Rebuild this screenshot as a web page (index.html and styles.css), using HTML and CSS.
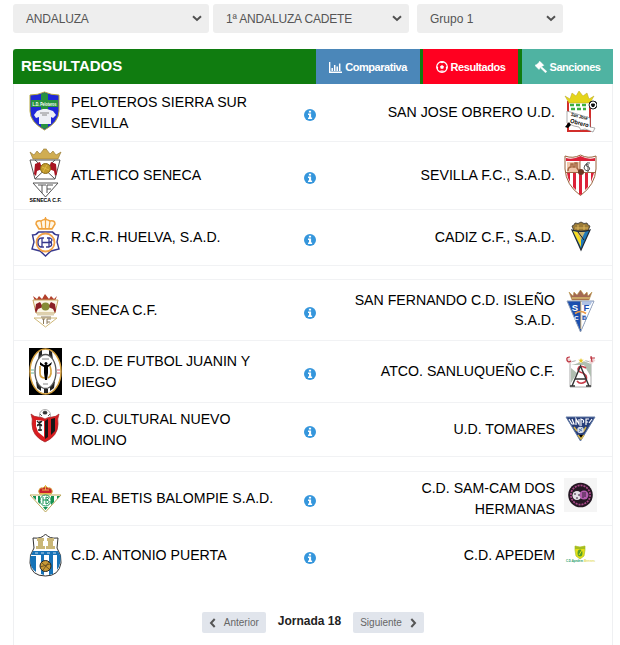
FILE: index.html
```
<!DOCTYPE html>
<html lang="es">
<head>
<meta charset="utf-8">
<title>Resultados</title>
<link rel="stylesheet" href="styles.css">
</head>
<body>
<svg class="defs" width="0" height="0">
  <symbol id="info" viewBox="0 0 12 12"><circle cx="6" cy="6" r="6" fill="#3596dc"/><path d="M4.900 1.700h2.200v1.700H4.900zM4 4.500h3.100v4h1v1.400H4V8.500h1V5.900H4z" fill="#fff"/></symbol>
  <symbol id="chev" viewBox="0 0 10 7"><path d="M1 1.300l4 3.700 4-3.700" fill="none" stroke="#505050" stroke-width="2"/></symbol>
</svg>

<div class="filters">
  <div class="select caps">ANDALUZA<svg><use href="#chev"/></svg></div>
  <div class="select caps">1ª ANDALUZA CADETE<svg><use href="#chev"/></svg></div>
  <div class="select group">Grupo 1<svg><use href="#chev"/></svg></div>
</div>

<section class="panel">
  <header class="bar">
    <h1>RESULTADOS</h1>
    <a class="tab compare"><svg viewBox="0 0 13 11"><path d="M.6 0v10.300H13M3.200 9V6M5.700 9V3M8.200 9V4.500M10.700 9V1.500" fill="none" stroke="#fff" stroke-width="1.500"/></svg>Comparativa</a>
    <a class="tab results"><svg viewBox="0 0 12 12"><circle cx="6" cy="6" r="5.300" fill="none" stroke="#fff" stroke-width="1.200"/><path d="M6 3.900l2 1.500-.8 2.300H4.800L4 5.400z M3.500 1.200L6 2.300l2.500-1.100L8 .5H4zM.8 5l1.400 1.200-.4 2.600L.7 7zM11.200 5L9.800 6.200l.4 2.600L11.300 7zM4 10.800l.5-1.400h3l.5 1.400z" fill="#fff"/></svg>Resultados</a>
    <a class="tab sanctions"><svg viewBox="0 0 12 12"><path d="M4.800.3l4 4-1 .8-.4-.2-1.200 1.200 1 .2 4.600 4.100-1.300 1.400-4.600-4.500-.4-1-.8.800.2.500-.9.900-4-4 .9-.9.600.2L4.200 1.300 4 .9z" fill="#fff" stroke="#fff" stroke-width=".5"/></svg>Sanciones</a>
  </header>

  <div class="row r1">
    <svg class="crest" viewBox="0 0 33 57">
      <path d="M1 11Q9 11 15.500 8 22 11 30 11V27Q30 38 15.500 46 1 38 1 27z" fill="#2028d8" stroke="#b5a83c"/>
      <path d="M12 10l3.500-1.500L19 10v33l-3.500 2-3.500-2zM2 16h27v7H2z" fill="#28923e"/>
      <text x="15.500" y="21.500" class="tiny" font-size="5" textLength="24" lengthAdjust="spacingAndGlyphs" fill="#fff">L.D. Peloteros</text>
      <path d="M8 27l6-2h4l6 2 3 4-3 3-2-1v7H10v-7l-3 1-2-3z" fill="#eef0f5"/><path d="M11 29h9M13 31h5" stroke="#888"/>
    </svg>
    <div class="name">PELOTEROS SIERRA SUR SEVILLA</div>
    <svg class="info"><use href="#info"/></svg>
    <div class="name away">SAN JOSE OBRERO U.D.</div>
    <svg class="crest" viewBox="0 0 33 57">
      <path d="M4 18h22v29H4z" fill="#fff" stroke="#d22e2b" stroke-width="2"/>
      <path d="M1 12l5 3 2-6 4 3 3-5 4 5 4-3 2 6 5-3-4 7H5z" fill="#e5d51a" stroke="#b7a720" stroke-width=".5"/>
      <path d="M6 21h17M7 25h15" stroke="#3cae3e" stroke-width="2.500" stroke-dasharray="4 2"/>
      <path d="M3 27l23 7v9l5 1-2 4-8-3-4 1-2-3-5-1-7-3z" fill="#fff" stroke="#777" stroke-width=".6"/>
      <text x="15" y="34" class="tiny" font-size="5" textLength="17" lengthAdjust="spacingAndGlyphs" transform="rotate(15 15 34)">San José</text><text x="15" y="41" class="tiny" font-size="6" textLength="19" lengthAdjust="spacingAndGlyphs" transform="rotate(15 15 41)">Obrero</text>
      <circle cx="29" cy="21" r="4" fill="#fff" stroke="#222"/><path d="M27.500 20h3l-.5 2.500h-2zM25.500 19l2-1.500M31 17.500l1.500 2M26 23.500l1 1M32 23l-1.500 1.500" fill="#111" stroke="#111"/><path d="M1 43l4-5 2 3-3 3z"/>
    </svg>
  </div>

  <div class="row r2">
    <svg class="crest" viewBox="0 0 33 67">
      <path d="M1 10l4 3 3-4 3 3 3.500-4.500V7h3v.5L21 12l3-3 3 4 5-3-3 7H4z" fill="#d0ad52" stroke="#91742e" stroke-width=".6"/>
      <path d="M1 18h30l-5 19H6zM6 37L26 18M26 37L6 18M4 41h25L16.500 55z" fill="none" stroke="#555"/>
      <path d="M6 22l5-2 2 7-5 2-1 5-2-2zM27 22l-5-2-2 7 5 2 1 5 2-2z" fill="#a81422"/>
      <circle cx="16.500" cy="26.500" r="5" fill="#c19a2d" stroke="#896917"/><path d="M13 25l7 3M18 23l-4 7" stroke="#edc64b" stroke-width=".7"/>
      <path d="M9 43h8M13 43v8M18 51v-8h6M18 47h4" fill="none" stroke="#555"/>
      <text x="16.500" y="60" class="tiny" font-size="5" textLength="32" lengthAdjust="spacingAndGlyphs">SENECA C.F.</text>
    </svg>
    <div class="name">ATLETICO SENECA</div>
    <svg class="info"><use href="#info"/></svg>
    <div class="name away">SEVILLA F.C., S.A.D.</div>
    <svg class="crest" viewBox="0 0 33 67">
      <path d="M1 14Q9 17 16.500 13 24 17 32 14V27Q31 43 16.500 53.500 2 43 1 27z" fill="#fff" stroke="#99613b"/>
      <path d="M2 16Q9 18 16.500 14 24 18 31 16v3H2zM3 31h3v9l-2-4zM9 31h3v17l-3-3zM15 31h3v21l-1.500 1-1.500-1zM21 31h3v14l-3 3zM27 31h3l-3 9z" fill="#dc2138"/>
      <path d="M3 20h13v10H3z" fill="#efc6aa"/><path d="M4 29q0-4 3-4v-3h2v3h2v-4h2v5l2 3" fill="none" stroke="#a46742" stroke-width="1.500"/><path d="M16 19v12M2 30.500h29" stroke="#9c6847"/><path d="M26 21q-4-1-4 1.500t3 2.500q2 2-1 4-3 0-4-3 0-4 4-4v8" fill="none" stroke="#555"/><circle cx="17" cy="30" r="3" fill="#6e3522"/>
    </svg>
  </div>

  <div class="row r3">
    <svg class="crest" viewBox="0 0 33 55">
      <path d="M10 19l-3-5q0-4 5-3 4-3 9 0 5-1 5 3l-3 5z" fill="#fff7e6" stroke="#f0a23d" stroke-width="1.500"/><path d="M16.500 7v12M15 9h3M12 11l1 7M21 11l-1 7M9 18.500h15" stroke="#f0a23d" stroke-width="1.200"/>
      <path d="M3.500 25q4 0 6-3h14q2 3 6 3l-1.500 7 2 7-8 2-5.500 5-5.500-5-8-2 2-7z" fill="#fff" stroke="#37388d" stroke-width="1.400"/>
      <circle cx="16.500" cy="32.500" r="9" fill="#fff" stroke="#f2a248" stroke-width="1.800"/><path d="M15 28q-6-1-6 4.500t6 4.500M13 28v9M20 28v9M13 32.500h10M18 28h3q4 2 0 4 4 3-1 5h-3" fill="none" stroke="#37388d" stroke-width="1.300"/>
    </svg>
    <div class="name">R.C.R. HUELVA, S.A.D.</div>
    <svg class="info"><use href="#info"/></svg>
    <div class="name away">CADIZ C.F., S.A.D.</div>
    <svg class="crest" viewBox="0 0 33 55">
      <path d="M8 16l2-1 1-2 3 .5L17 12l3 1.500 3-.5 1 2 2 1-2 5H10z" fill="#9b7b38" stroke="#333" stroke-width=".8"/><path d="M11 18h13M14 15v5M20 15v5" stroke="#ddb75c"/>
      <path d="M8 20q9 3 18 0L17 40z" fill="#2079b9" stroke="#222a35" stroke-width="1.200"/><path d="M9 21l8 2v14z" fill="#f8dc20"/><path d="M13 22h8l-4 8z" fill="#ccb671"/><path d="M14 22l6 8" stroke="#222"/>
    </svg>
  </div>
  <div class="spacer"></div>

  <div class="row r4">
    <svg class="crest" viewBox="0 0 33 60">
      <path d="M4 16l4 3 2-3 3 3 3-5 4 5 2-3 3 3 3-3-2 5H6z" fill="#b3412c"/><path d="M4 20h25l-3 13H7z" fill="#fbf6e6" stroke="#c7a660"/>
      <path d="M7 24l4-2 3 5-5 2-2 4-1-3zM26 24l-4-2-3 5 5 2 2 4 1-3z" fill="#8c2026"/><circle cx="16.500" cy="26.500" r="4" fill="#858b35"/>
      <path d="M8 34h17" stroke="#ddd0ae" stroke-width="3"/><path d="M5 38h23L16.500 47z" fill="#fff" stroke="#cfb878"/><path d="M12 37h10M13 39h3M14.500 39v5M18 44v-5h4M18 42h3" stroke="#8b795a" fill="none"/>
    </svg>
    <div class="name">SENECA C.F.</div>
    <svg class="info"><use href="#info"/></svg>
    <div class="name away">SAN FERNANDO C.D. ISLEÑO S.A.D.</div>
    <svg class="crest" viewBox="0 0 33 60">
      <path d="M5 12l4 4 1-4 3 3 3.500-5 3.500 5 3-3 1 4 4-4-3 8H8z" fill="#a36852" stroke="#b9974a" stroke-width=".6"/><path d="M8 18h18" stroke="#caa665" stroke-width="2"/>
      <path d="M3 21h27L16.500 52z" fill="#1b4fae" stroke="#8d9cb5"/><path d="M17 21.500h12.500L17 50z" fill="#fff"/><path d="M18 22h10l-1.500 3H18zM18 35h4l-1.500 5H18z" fill="#1b4fae" opacity=".35"/>
      <text x="11" y="30.500" class="tiny" font-size="9.500" fill="#fff">S</text><text x="22.500" y="30.500" class="tiny" font-size="9.500" fill="#1b4fae">F</text><path d="M11 33.500q5.500-4 11 0" fill="none" stroke="#ed9944" stroke-width="1.600"/><text x="12.500" y="40" class="tiny" font-size="6" fill="#fff">C</text><text x="20.500" y="40" class="tiny" font-size="6" fill="#1b4fae">D</text><path d="M16.800 21v28" stroke="#c1a570"/>
    </svg>
  </div>

  <div class="row r5">
    <svg class="crest" viewBox="0 0 33 61">
      <path d="M0 7h33v47H0z"/><ellipse cx="16.500" cy="30.500" rx="15.500" ry="22.500" fill="#fff" stroke="#d5a03e" stroke-width="1.500"/>
      <path d="M10 11l3-2v7l-4 3zM23 11l-3-2v7l4 3zM7 40l5 5v5l-4-3zM26 40l-5 5v5l4-3zM15 48h4v4h-4z" fill="#222"/>
      <ellipse cx="16.500" cy="30.500" rx="10.500" ry="17" fill="#fff" stroke="#555" stroke-width="1.300"/>
      <path d="M11 25v7q0 5 5 5M21 25q3 9-2 12" fill="none" stroke="#d5a03e" stroke-width="1.700"/><path d="M11 21l4 3h4l4-3-1 3-3 2v6l-1 7h-2l-1-7v-6l-4-2z"/><circle cx="17" cy="22.500" r="1.500"/><path d="M13 18h7M14 43h5" stroke="#888"/><path d="M2 29h3M2 32h3" stroke="#68b898"/><path d="M28 29h3M28 32h3" stroke="#db6471"/>
    </svg>
    <div class="name">C.D. DE FUTBOL JUANIN Y DIEGO</div>
    <svg class="info"><use href="#info"/></svg>
    <div class="name away">ATCO. SANLUQUEÑO C.F.</div>
    <svg class="crest" viewBox="0 0 33 61">
      <path d="M6 21q5 0 10.500-4.500Q22 21 27 21v25H6z" fill="#fff" stroke="#aaa"/><path d="M7 24q8-1 10-5l10 4v13l-7-12zM7 27l6 5-6 10z" fill="#b1bfb1"/>
      <path d="M7 22l-4-4M26 22l4-4" stroke="#eed5d5" stroke-width="4"/><path d="M6 16q-4 0-3 3t4 1M26 17h5M27 15l1 6" fill="none" stroke="#bd3440" stroke-width="1.200"/><path d="M7 17l9.500-2 9.500 2-9.500 5z" fill="#fff"/>
      <path d="M17 17l.7 1.800h2l-1.600 1.300.6 2-1.700-1.200-1.700 1.200.6-2-1.600-1.300h2z" fill="#e7c521"/>
      <path d="M22 27q-7-4-8 1 0 3 5 4 6 4 2 9-5 3-8-1" fill="none" stroke="#c83b48" stroke-width="1.600"/><path d="M8 45l8.500-20L25 45M11 38h11M6 45h5M22 45h5" fill="none" stroke="#333" stroke-width="1.400"/>
    </svg>
  </div>

  <div class="row r6">
    <svg class="crest" viewBox="0 0 33 53">
      <circle cx="16" cy="12" r="5.500" fill="#fff" stroke="#999" stroke-width=".8"/><path d="M14 9l2-1 2 1-.5 2h-3zM11 11l2 2M21 11l-2 2" fill="#333" stroke="#333" stroke-width=".8"/>
      <path d="M2 11q3 3 7 3 4 0 7 2 3-2 7-2 4 0 7-3-2 5-1 10 0 12-13 18Q3 33 3 21q1-5-1-10z" fill="#d91c20" stroke="#a22a2b" stroke-width=".7"/>
      <path d="M7 17l8 1v16l-6-5-2-6z" fill="#fff"/><path d="M8 18l5 5M13 18l-5 5M8 22h5M11 18v10M9 27h4" stroke="#222" stroke-width="1.300"/><path d="M16 18l3-2v18l-3 2zM22 16l4-1v13l-4 4z" fill="#171717"/>
    </svg>
    <div class="name">C.D. CULTURAL NUEVO MOLINO</div>
    <svg class="info"><use href="#info"/></svg>
    <div class="name away">U.D. TOMARES</div>
    <svg class="crest" viewBox="0 0 33 53">
      <path d="M2 14h29L16.500 38z" fill="#263d79" stroke="#647da8"/><path d="M5 16l3 5h2l-2-5M12 22v-6l3 5v-5M17 23v-7q4 1 2 4M22 22v-6h3M22 19h2M28 16l-3 4" stroke="#fff" stroke-width="1.200" fill="none"/><path d="M10 24l3 4M22 24l-3 5M14 32l3 4 3-4" stroke="#d5b54d" stroke-width="1.500"/><circle cx="16.500" cy="27" r="3.300" fill="#d5dce8"/><path d="M15 26l3 2M18 25l-3 4" stroke="#5879ad"/>
    </svg>
  </div>
  <div class="spacer tall"></div>

  <div class="row r7">
    <svg class="crest" viewBox="0 0 33 53">
      <path d="M11 22q-2-2-1-4 1-3 4-2l2.500-2 2.500 2q3-1 4 2 1 2-1 4z" fill="#c9222e" stroke="#d5a538"/><path d="M11 21.500h11M16.500 13v5M13 18h7" stroke="#e8bb48"/>
      <path d="M1 23h31L16.500 40z" fill="#fff" stroke="#bca95b"/><path d="M4 24h3v4l-3-3zM9 24h2v8l-2-2zM22 24h3v6l-3 3zM28 24h3l-3 3zM14 35h5l-2.500 3z" fill="#159151"/>
      <circle cx="16.500" cy="28.500" r="5.500" fill="#fff" stroke="#159151"/><path d="M14 25v7M14 28h5M17 25v7M17 25q5 1 1 3 5 2-1 4" fill="none" stroke="#159151"/>
    </svg>
    <div class="name">REAL BETIS BALOMPIE S.A.D.</div>
    <svg class="info"><use href="#info"/></svg>
    <div class="name away">C.D. SAM-CAM DOS HERMANAS</div>
    <svg class="crest" viewBox="0 0 33 53">
      <path d="M0 6h33v34H0z" fill="#f5f5f5"/><circle cx="16.500" cy="23" r="12.300" fill="#251723"/><circle cx="16.500" cy="23" r="9.600" fill="none" stroke="#a84788" stroke-width="1.700" stroke-dasharray="2 1"/><circle cx="13" cy="23.500" r="4.500" fill="#e4dfe6"/><circle cx="20" cy="23" r="4.500" fill="#b45bae"/><path d="M10 22h2M14 23h2M12 26h2M19 20v6M21 20v5" stroke="#352238"/>
    </svg>
  </div>

  <div class="row r8">
    <svg class="crest" viewBox="0 0 33 58">
      <path d="M4 12q9 1 12.500-4Q20 13 29 12l-1 10q5 7 4 15-2 13-15.500 13Q2 50 1 37q-1-8 4-15z" fill="#fff" stroke="#333"/>
      <path d="M4 25h25l2 4H2z" fill="#1773b7"/><path d="M1.500 30H7v16q-6-4-6-12zM12 29h3v20l-3-1zM20 29h4v19l-4 1zM28 29h3.500q1 9-3.500 15z" fill="#1773b7"/>
      <path d="M8 12h7v3h-1v5h2v3H7v-3h2v-5H8zM18 12h7v3h-1v5h2v3h-9v-3h2v-5h-1z" fill="#cab778"/><path d="M6 27h21" stroke="#c8dceb" stroke-dasharray="3 3"/>
      <circle cx="16.500" cy="40" r="5.500" fill="#c99a35" stroke="#222"/><path d="M13 37l7 6M20 36l-6 8M11 41l10-3" stroke="#5f4820" stroke-width=".8"/>
    </svg>
    <div class="name">C.D. ANTONIO PUERTA</div>
    <svg class="info"><use href="#info"/></svg>
    <div class="name away">C.D. APEDEM</div>
    <svg class="crest" viewBox="0 0 33 58">
      <path d="M11 20q5 2 10 0v4l-1 6-4 3-4-3-1-6z" fill="#e4df15" stroke="#a9c22c" stroke-width=".7"/><path d="M11 20q5 2 10 0v3H11z" fill="#a5bd20"/><ellipse cx="16" cy="27" rx="2.500" ry="3.500" fill="#559f2c"/><path d="M15 29l3-5" stroke="#e4df15"/>
      <text x="2" y="36" class="tiny start" font-size="3.500" textLength="17" lengthAdjust="spacingAndGlyphs" fill="#269b67">C.D.Apedem</text><text x="20" y="36" class="tiny start" font-size="3.500" textLength="11" lengthAdjust="spacingAndGlyphs" fill="#e4dc63">Brenes</text>
    </svg>
  </div>

  <nav class="pager">
    <a class="page prev"><svg viewBox="0 0 7 10"><path d="M5.700 1L2 5l3.700 4" fill="none" stroke="#555" stroke-width="2"/></svg>Anterior</a>
    <strong>Jornada 18</strong>
    <a class="page next">Siguiente<svg viewBox="0 0 7 10"><path d="M1.300 1L5 5 1.300 9" fill="none" stroke="#555" stroke-width="2"/></svg></a>
  </nav>
</section>
</body>
</html>
```
FILE: styles.css
```
* { box-sizing: border-box; }
body {
  margin: 0;
  width: 620px;
  height: 645px;
  overflow: hidden;
  background: #fff;
  color: #000;
  font-family: "Liberation Sans", Arial, sans-serif;
}
svg { flex: none; display: block; }
.defs { position: absolute; }
.filters { display: flex; gap: 4px; padding: 4px 0 0 13px; }
.select {
  display: flex;
  align-items: center;
  justify-content: space-between;
  width: 196px;
  height: 29px;
  padding: 0 7px 0 13px;
  border-radius: 3px;
  background: #eee;
  color: #555;
  font-size: 12px;
}
.caps { letter-spacing: -.17px; }
.select svg { width: 10px; height: 7px; }
.group { width: 146px; margin-left: 4px; }
.panel {
  width: 600px;
  height: 610px;
  margin: 16px 0 0 13px;
  border: solid #eff0f2;
  border-width: 0 1px;
}
.bar {
  display: flex;
  height: 35px;
  margin: 0 -1px;
  background: #107c10;
  border-radius: 3px 0 0 0;
}
.bar h1 {
  flex: 1;
  margin: 0;
  padding-left: 8px;
  color: #fff;
  font-size: 15px;
  line-height: 34px;
  letter-spacing: .02px;
}
.tab {
  display: flex;
  align-items: center;
  justify-content: center;
  gap: 3px;
  padding-top: 1px;
  color: #fff;
  font-size: 11px;
  font-weight: bold;
  letter-spacing: -.45px;
}
.tab svg { width: 12px; height: 12px; }
.compare { width: 104px; background: #4b87b9; }
.compare svg { width: 13px; height: 11px; }
.results { width: 95px; margin: 0 4px 0 3px; background: #ff0020; }
.sanctions { width: 91px; background: #4fb3a2; }
.row {
  display: grid;
  grid-template-columns: 33px 221px 54px 227px 33px;
  align-items: center;
  padding: 0 15px;
  border-bottom: 1px solid #f1f2f4;
}
.r1 { height: 58px; }
.r2 { height: 68px; }
.r3 { height: 56px; }
.r4 { height: 61px; }
.r5 { height: 62px; }
.r6, .r7 { height: 54px; }
.r8 { height: 58px; border-bottom: 0; }
.spacer { height: 14px; border-bottom: 1px solid #f1f2f4; }
.tall { height: 15px; }
.crest { width: 33px; height: 100%; }
.name { padding-left: 9px; font-size: 14.15px; line-height: 20.4px; }
.away { padding: 0 9px 0 6px; text-align: right; }
.info { width: 12px; height: 12px; margin: 5px auto 0; }
.tiny { font-weight: bold; text-anchor: middle; }
.start { text-anchor: start; }
.pager {
  display: flex;
  justify-content: center;
  gap: 12px;
  padding-top: 28px;
}
.pager strong { color: #222; font-size: 12px; line-height: 18px; }
.page {
  display: flex;
  align-items: center;
  justify-content: space-between;
  height: 21px;
  padding: 0 7px;
  border-radius: 2px;
  background: #e1e5ec;
  color: #666;
  font-size: 10px;
}
.page svg { width: 7px; height: 10px; }
.prev { width: 64px; }
.next { width: 71px; }
```
